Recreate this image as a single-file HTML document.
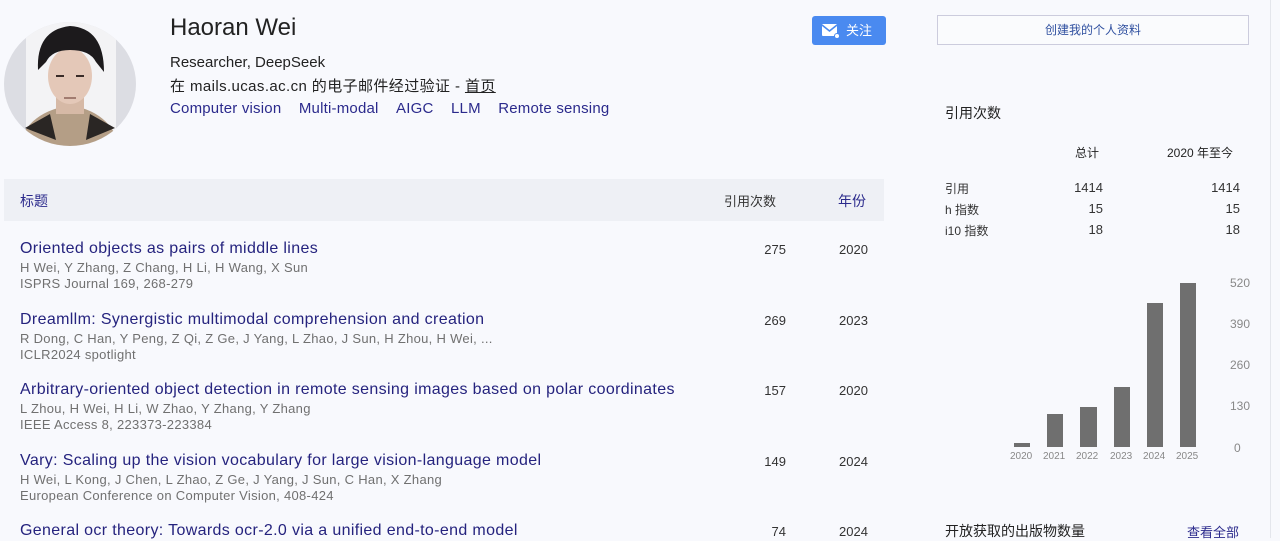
<!DOCTYPE html>
<html><head><meta charset="utf-8"><style>
*{margin:0;padding:0;box-sizing:border-box}
body{width:1280px;height:538px;background:#f8f9fd;font-family:"Liberation Sans","Noto Sans CJK SC",sans-serif;position:relative;overflow:hidden;color:#222}
.a{position:absolute;white-space:nowrap}
.t{color:#25237e;font-size:16px;letter-spacing:0.35px}
.g{color:#707070;font-size:13px;letter-spacing:0.3px}
.n{color:#333;font-size:13px}
</style></head><body>
<svg class="a" style="left:0;top:14px" width="140" height="140" viewBox="0 14 140 140">
<defs><clipPath id="c"><ellipse cx="70" cy="84" rx="66" ry="62"/></clipPath></defs>
<g clip-path="url(#c)">
<rect x="0" y="14" width="140" height="140" fill="#dcdde3"/>
<rect x="26" y="14" width="90" height="140" fill="#f3f3f5"/>
<path d="M20 140 Q30 116 58 108 L82 108 Q108 116 118 140 L118 160 L20 160Z" fill="#b49e86"/>
<path d="M25 128 L50 114 L56 140 Z M115 128 L90 114 L86 140Z" fill="#2a2624"/>
<rect x="56" y="96" width="28" height="18" fill="#d6b9a6"/>
<ellipse cx="70" cy="76" rx="22" ry="28" fill="#e4c8b8"/>
<path d="M38 70 Q36 30 70 26 Q104 28 104 72 L96 62 Q90 50 70 50 Q52 50 46 62 Z" fill="#1c1a1c"/>
<path d="M56 76 h8 M76 76 h8" stroke="#3a2c28" stroke-width="2"/>
<path d="M64 98 h12" stroke="#a27c70" stroke-width="2"/>
</g></svg>
<div class="a" style="left:170px;top:14px;font-size:24px;color:#222">Haoran Wei</div>
<div class="a" style="left:170px;top:54px;font-size:15px;color:#222">Researcher, DeepSeek</div>
<div class="a" style="left:170px;top:75px;font-size:15px;color:#222;letter-spacing:0.4px">在 mails.ucas.ac.cn 的电子邮件经过验证 - <span style="text-decoration:underline">首页</span></div>
<div class="a" style="left:170px;top:100px;font-size:15px;color:#2b2a8c;letter-spacing:0.2px">Computer vision&nbsp;&nbsp;&nbsp;&nbsp;Multi-modal&nbsp;&nbsp;&nbsp;&nbsp;AIGC&nbsp;&nbsp;&nbsp;&nbsp;LLM&nbsp;&nbsp;&nbsp;&nbsp;Remote sensing</div>
<div class="a" style="left:812px;top:16px;width:74px;height:29px;background:#4a8af0;border-radius:3px;color:#fff;font-size:13px;line-height:29px;padding-left:34px">关注
<svg style="position:absolute;left:9px;top:7px" width="20" height="16"><rect x="1" y="1" width="15" height="12" rx="1" fill="#fff"/><path d="M1 2 L8.5 8 L16 2" stroke="#4a8af0" stroke-width="1.6" fill="none"/><circle cx="16" cy="13" r="3" fill="#4a8af0"/><circle cx="16" cy="13" r="2" fill="#fff"/></svg></div>
<div class="a" style="left:937px;top:15px;width:312px;height:30px;border:1px solid #ccd;background:#fafbfd;color:#3050a0;font-size:12px;line-height:28px;text-align:center">创建我的个人资料</div>
<div class="a" style="left:945px;top:103px;font-size:14px;color:#222">引用次数</div>
<div class="a" style="left:1075px;top:144px;font-size:12px;color:#222">总计</div>
<div class="a" style="left:1167px;top:144px;font-size:12px;color:#222">2020 年至今</div>
<div class="a n" style="left:945px;top:180px;font-size:12px">引用</div>
<div class="a n" style="left:945px;top:201px;font-size:12px">h 指数</div>
<div class="a n" style="left:945px;top:222px;font-size:12px">i10 指数</div>
<div class="a n" style="left:1040px;top:180px;width:63px;text-align:right">1414</div>
<div class="a n" style="left:1040px;top:201px;width:63px;text-align:right">15</div>
<div class="a n" style="left:1040px;top:222px;width:63px;text-align:right">18</div>
<div class="a n" style="left:1180px;top:180px;width:60px;text-align:right">1414</div>
<div class="a n" style="left:1180px;top:201px;width:60px;text-align:right">15</div>
<div class="a n" style="left:1180px;top:222px;width:60px;text-align:right">18</div>
<svg class="a" style="left:1000px;top:270px" width="280" height="200">
<g fill="#6f6f6f">
<rect x="14" y="173" width="16" height="4"/>
<rect x="47" y="144" width="16" height="33"/>
<rect x="80" y="137" width="17" height="40"/>
<rect x="114" y="117" width="16" height="60"/>
<rect x="147" y="33" width="16" height="144"/>
<rect x="180" y="13" width="16" height="164"/>
</g>
<g font-family="Liberation Sans" font-size="10" fill="#888">
<text x="10" y="189">2020</text><text x="43" y="189">2021</text><text x="76" y="189">2022</text><text x="110" y="189">2023</text><text x="143" y="189">2024</text><text x="176" y="189">2025</text>
<g font-size="12"><text x="230" y="17">520</text><text x="230" y="58">390</text><text x="230" y="99">260</text><text x="230" y="140">130</text><text x="234" y="182">0</text></g>
</g></svg>
<div class="a" style="left:945px;top:521px;font-size:14px;color:#222">开放获取的出版物数量</div>
<div class="a" style="left:1187px;top:522px;font-size:13px;color:#2b2a8c">查看全部</div>
<div class="a" style="left:4px;top:179px;width:880px;height:42px;background:#eef0f5"></div>
<div class="a" style="left:20px;top:191px;font-size:14px;color:#2b2a8c">标题</div>
<div class="a" style="left:724px;top:191px;font-size:13px;color:#333">引用次数</div>
<div class="a" style="left:838px;top:191px;font-size:14px;color:#2b2a8c">年份</div>

<div class="a t" style="left:20px;top:240px">Oriented objects as pairs of middle lines</div>
<div class="a g" style="left:20px;top:260px">H Wei, Y Zhang, Z Chang, H Li, H Wang, X Sun</div>
<div class="a g" style="left:20px;top:276px">ISPRS Journal 169, 268-279</div>
<div class="a n" style="left:740px;top:242px;width:46px;text-align:right">275</div>
<div class="a n" style="left:839px;top:242px">2020</div>

<div class="a t" style="left:20px;top:311px">Dreamllm: Synergistic multimodal comprehension and creation</div>
<div class="a g" style="left:20px;top:331px">R Dong, C Han, Y Peng, Z Qi, Z Ge, J Yang, L Zhao, J Sun, H Zhou, H Wei, ...</div>
<div class="a g" style="left:20px;top:347px">ICLR2024 spotlight</div>
<div class="a n" style="left:740px;top:313px;width:46px;text-align:right">269</div>
<div class="a n" style="left:839px;top:313px">2023</div>

<div class="a t" style="left:20px;top:381px">Arbitrary-oriented object detection in remote sensing images based on polar coordinates</div>
<div class="a g" style="left:20px;top:401px">L Zhou, H Wei, H Li, W Zhao, Y Zhang, Y Zhang</div>
<div class="a g" style="left:20px;top:417px">IEEE Access 8, 223373-223384</div>
<div class="a n" style="left:740px;top:383px;width:46px;text-align:right">157</div>
<div class="a n" style="left:839px;top:383px">2020</div>

<div class="a t" style="left:20px;top:452px">Vary: Scaling up the vision vocabulary for large vision-language model</div>
<div class="a g" style="left:20px;top:472px">H Wei, L Kong, J Chen, L Zhao, Z Ge, J Yang, J Sun, C Han, X Zhang</div>
<div class="a g" style="left:20px;top:488px">European Conference on Computer Vision, 408-424</div>
<div class="a n" style="left:740px;top:454px;width:46px;text-align:right">149</div>
<div class="a n" style="left:839px;top:454px">2024</div>

<div class="a t" style="left:20px;top:522px">General ocr theory: Towards ocr-2.0 via a unified end-to-end model</div>
<div class="a n" style="left:740px;top:524px;width:46px;text-align:right">74</div>
<div class="a n" style="left:839px;top:524px">2024</div>
<div class="a" style="left:1270px;top:0;width:1px;height:538px;background:#e4e6ec"></div>
</body></html>
